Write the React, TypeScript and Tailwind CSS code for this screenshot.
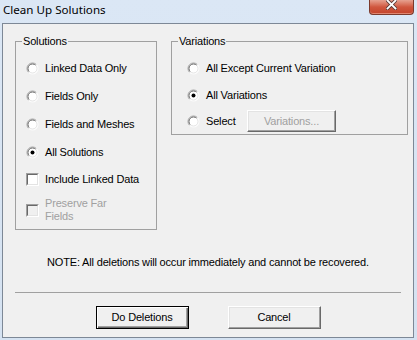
import React from "react";

function Radio({ checked = false }: { checked?: boolean }) {
  return (
    <svg width="13" height="13" viewBox="0 0 13 13" className="shrink-0">
      <circle cx="6.5" cy="6.5" r="5.5" fill="#ffffff" />
      <path d="M2.6 10.4 A5.5 5.5 0 0 1 10.4 2.6" fill="none" stroke="#a0a0a0" strokeWidth="1" />
      <path d="M10.4 2.6 A5.5 5.5 0 0 1 2.6 10.4" fill="none" stroke="#ffffff" strokeWidth="1" />
      <path d="M3.3 9.7 A4.5 4.5 0 0 1 9.7 3.3" fill="none" stroke="#696969" strokeWidth="1" />
      <path d="M9.7 3.3 A4.5 4.5 0 0 1 3.3 9.7" fill="none" stroke="#e3e3e3" strokeWidth="1" />
      {checked && <circle cx="6.5" cy="6.5" r="2" fill="#000000" />}
    </svg>
  );
}

function Checkbox({ disabled = false }: { disabled?: boolean }) {
  return (
    <div className="w-[13px] h-[13px] shrink-0 border-t border-l border-t-[#a0a0a0] border-l-[#a0a0a0] border-b border-r border-b-[#ffffff] border-r-[#ffffff]">
      <div
        className={
          "w-full h-full border-t border-l border-t-[#696969] border-l-[#696969] border-b border-r border-b-[#e3e3e3] border-r-[#e3e3e3] " +
          (disabled ? "bg-[#f0f0f0]" : "bg-white")
        }
      />
    </div>
  );
}

function GroupLabel({ children }: { children: React.ReactNode }) {
  return (
    <span className="absolute left-[6px] -top-[7px] px-[1px] bg-[#f0f0f0] leading-[13px] text-[11px] text-black">
      {children}
    </span>
  );
}

export default function App() {
  return (
    <div className="w-[417px] h-[340px] flex flex-col bg-gradient-to-b from-[#dbe7f5] to-[#d5e2f1] font-['Liberation_Sans',Arial,sans-serif] text-[11px] tracking-[-0.17px] text-black overflow-hidden">
      {/* Title bar */}
      <div className="h-[23px] flex items-start justify-between shrink-0">
        <span className="pl-[3px] pt-[2px] text-[11.6px] leading-[16px] tracking-normal font-['Noto_Sans',sans-serif] text-black">
          Clean Up Solutions
        </span>
        <div className="mr-[3px] w-[45px] h-[15px] rounded-b-[4px] border border-t-0 border-[#7c3a2c] bg-gradient-to-b from-[#e6a190] via-[#d0573f] to-[#c3432a] flex justify-center items-start shadow-[inset_0_-1px_0_#e08670]">
          <svg width="11" height="10" viewBox="0 0 11 10">
            <path d="M1.5 0.5 L9.5 8.5 M9.5 0.5 L1.5 8.5" stroke="#5a3a36" strokeWidth="3.6" strokeLinecap="square" />
            <path d="M1.5 0.5 L9.5 8.5 M9.5 0.5 L1.5 8.5" stroke="#ffffff" strokeWidth="1.8" strokeLinecap="square" />
          </svg>
        </div>
      </div>

      {/* Client area */}
      <div className="ml-[2px] mr-[3px] h-[315px] border border-[#7d8896] bg-[#f0f0f0] flex flex-col shrink-0">
        <div className="flex items-start mt-[17px] ml-[12px] gap-[14px]">
          {/* Solutions */}
          <div className="relative w-[142px] h-[189px] border border-[#a0a0a0] shrink-0">
            <GroupLabel>Solutions</GroupLabel>
            <div className="flex flex-col pl-[10px] pt-[18px]">
              <div className="h-[16px] flex items-center gap-[6px]">
                <Radio />
                <span>Linked Data Only</span>
              </div>
              <div className="h-[16px] mt-[12px] flex items-center gap-[6px]">
                <Radio />
                <span>Fields Only</span>
              </div>
              <div className="h-[16px] mt-[12px] flex items-center gap-[6px]">
                <Radio />
                <span>Fields and Meshes</span>
              </div>
              <div className="h-[16px] mt-[12px] flex items-center gap-[6px]">
                <Radio checked />
                <span>All Solutions</span>
              </div>
              <div className="h-[16px] mt-[11px] flex items-center gap-[6px]">
                <Checkbox />
                <span>Include Linked Data</span>
              </div>
              <div className="h-[26px] mt-[10px] flex items-center gap-[6px]">
                <Checkbox disabled />
                <span className="leading-[13px] text-[#a0a0a0]">
                  Preserve Far
                  <br />
                  Fields
                </span>
              </div>
            </div>
          </div>

          {/* Variations */}
          <div className="relative w-[237px] h-[94px] border border-[#a0a0a0] shrink-0">
            <GroupLabel>Variations</GroupLabel>
            <div className="flex flex-col pl-[15px] pt-[18px]">
              <div className="h-[16px] flex items-center gap-[6px]">
                <Radio />
                <span>All Except Current Variation</span>
              </div>
              <div className="h-[16px] mt-[11px] flex items-center gap-[6px]">
                <Radio checked />
                <span>All Variations</span>
              </div>
              <div className="h-[22px] mt-[7px] flex items-center gap-[6px]">
                <Radio />
                <span className="w-[35px]">Select</span>
                <div className="w-[89px] h-[22px] flex items-center justify-center border-t border-l border-t-white border-l-white border-b border-r border-b-[#696969] border-r-[#696969] shadow-[inset_-1px_-1px_0_#a0a0a0,inset_1px_1px_0_#e3e3e3] text-[#a0a0a0]">
                  Variations...
                </div>
              </div>
            </div>
          </div>
        </div>

        <div className="mt-[26px] h-[13px] leading-[13px] text-center">
          NOTE: All deletions will occur immediately and cannot be recovered.
        </div>

        <div className="mt-[23px] ml-[12px] w-[386px] h-[1px] bg-[#a0a0a0]" />

        <div className="mt-[13px] flex justify-center gap-[39px]">
          <div className="w-[93px] h-[23px] flex items-center justify-center border border-black shadow-[inset_1px_1px_0_#ffffff,inset_-1px_-1px_0_#696969,inset_-2px_-2px_0_#a0a0a0]">
            Do Deletions
          </div>
          <div className="w-[93px] h-[23px] flex items-center justify-center border-t border-l border-t-white border-l-white border-b border-r border-b-[#696969] border-r-[#696969] shadow-[inset_-1px_-1px_0_#a0a0a0,inset_1px_1px_0_#e3e3e3]">
            Cancel
          </div>
        </div>
      </div>
    </div>
  );
}
